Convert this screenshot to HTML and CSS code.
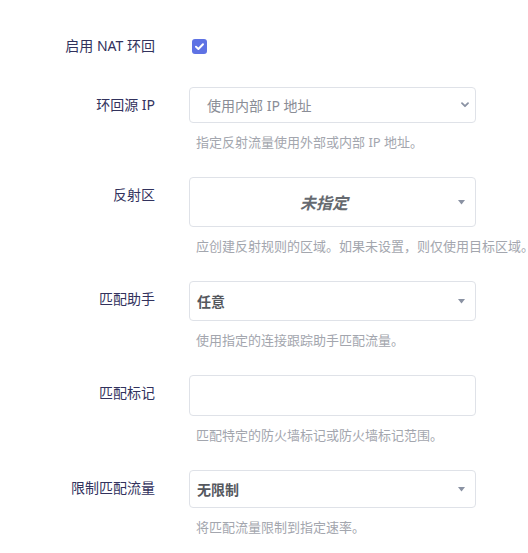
FILE: index.html
```html
<!DOCTYPE html>
<html lang="zh-CN">
<head>
<meta charset="utf-8">
<title>NAT 环回</title>
<link rel="stylesheet" href="styles.css">
</head>
<body>
<div class="form">
  <div class="row row-first">
    <div class="label label-inline">启用 NAT 环回</div>
    <div class="field field-inline">
      <span class="checkbox">
        <svg width="15" height="15" viewBox="0 0 15 15"><path d="M4 7.8 L6.4 10 L11 5.2" fill="none" stroke="#fff" stroke-width="2" stroke-linecap="round" stroke-linejoin="round"/></svg>
      </span>
    </div>
  </div>

  <div class="row">
    <div class="label">环回源 IP</div>
    <div class="field">
      <div class="box box-select">
        <span class="select-text">使用内部 IP 地址</span>
        <svg class="chev" width="8" height="6" viewBox="0 0 8 6"><path d="M1 1.2 L4 4.2 L7 1.2" fill="none" stroke="#8a92a3" stroke-width="1.8" stroke-linecap="round" stroke-linejoin="round"/></svg>
      </div>
      <div class="desc">指定反射流量使用外部或内部 IP 地址。</div>
    </div>
  </div>

  <div class="row">
    <div class="label">反射区</div>
    <div class="field">
      <div class="box box-zone">
        <span class="zone-text">未指定</span>
        <svg class="tri" width="7" height="5" viewBox="0 0 7 5"><path d="M0 0 H7 L3.5 4.5 Z" fill="#8a92a3"/></svg>
      </div>
      <div class="desc">应创建反射规则的区域。如果未设置，则仅使用目标区域。</div>
    </div>
  </div>

  <div class="row">
    <div class="label">匹配助手</div>
    <div class="field">
      <div class="box box-drop box-h40">
        <span class="drop-text">任意</span>
        <svg class="tri" width="7" height="5" viewBox="0 0 7 5"><path d="M0 0 H7 L3.5 4.5 Z" fill="#8a92a3"/></svg>
      </div>
      <div class="desc">使用指定的连接跟踪助手匹配流量。</div>
    </div>
  </div>

  <div class="row">
    <div class="label">匹配标记</div>
    <div class="field">
      <div class="box box-input"></div>
      <div class="desc">匹配特定的防火墙标记或防火墙标记范围。</div>
    </div>
  </div>

  <div class="row">
    <div class="label">限制匹配流量</div>
    <div class="field">
      <div class="box box-drop box-h38">
        <span class="drop-text">无限制</span>
        <svg class="tri" width="7" height="5" viewBox="0 0 7 5"><path d="M0 0 H7 L3.5 4.5 Z" fill="#8a92a3"/></svg>
      </div>
      <div class="desc">将匹配流量限制到指定速率。</div>
    </div>
  </div>
</div>
</body>
</html>
```

FILE: styles.css
```css
html, body {
  margin: 0;
  padding: 0;
  background: #ffffff;
  overflow: hidden;
}

body {
  font-family: "Noto Sans", "Noto Sans CJK SC", sans-serif;
  width: 528px;
  height: 553px;
}

.form {
  padding-top: 36px;
  display: flex;
  flex-direction: column;
  gap: 26px;
}

.row {
  display: grid;
  grid-template-columns: 155px 287px;
  column-gap: 34px;
  align-items: start;
}

.row-first {
  margin-bottom: 5px;
}

.label {
  text-align: right;
  font-size: 14px;
  line-height: 20px;
  color: #32325d;
  padding-top: 8px;
  white-space: nowrap;
}

.label-inline {
  padding-top: 0;
}

.field {
  display: flex;
  flex-direction: column;
  min-width: 0;
}

.field-inline {
  flex-direction: row;
  align-items: center;
  height: 20px;
  padding-left: 3px;
}

.checkbox {
  width: 15px;
  height: 15px;
  border-radius: 3px;
  background: #5e72e4;
  display: flex;
  margin-top: 1px;
}

.box {
  box-sizing: border-box;
  border: 1px solid #dfe2e8;
  border-radius: 4px;
  background: #fff;
  display: flex;
  align-items: center;
}

.box-select {
  height: 36px;
  padding: 0 6px 0 17px;
}

.select-text {
  flex: 1;
  font-size: 14px;
  color: #8a8d96;
}

.chev {
  display: block;
}

.box-zone {
  height: 50px;
  padding: 0 10px 0 0;
}

.zone-text {
  flex: 1;
  text-align: center;
  font-size: 16px;
  font-weight: bold;
  font-style: italic;
  color: #666a70;
}

.tri {
  display: block;
}

.box-drop {
  padding: 0 10px 0 7px;
}

.box-h40 {
  height: 40px;
}

.box-h38 {
  height: 38px;
}

.drop-text {
  flex: 1;
  font-size: 14px;
  font-weight: bold;
  color: #55585e;
}

.box-input {
  height: 41px;
}

.desc {
  margin-top: 10px;
  padding-left: 7px;
  font-size: 13px;
  line-height: 18px;
  color: #a3a6ae;
  white-space: nowrap;
}
```
